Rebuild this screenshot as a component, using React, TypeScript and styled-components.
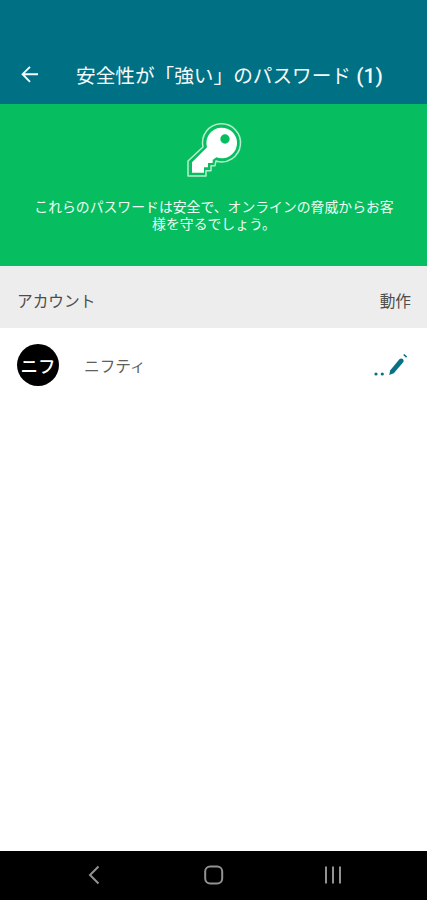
import React from "react";
import styled, { createGlobalStyle } from "styled-components";

const GlobalStyle = createGlobalStyle`
  * { box-sizing: border-box; }
  body { margin: 0; background: #fff; font-family: Roboto, "Noto Sans CJK JP", sans-serif; }
`;

const Screen = styled.div`
  display: flex;
  flex-direction: column;
  width: 427px;
  height: 900px;
  background: #fff;
  overflow: hidden;
`;

const AppBar = styled.header`
  display: flex;
  align-items: center;
  height: 104px;
  padding: 46px 0 0 20px;
  background: #007084;
  border-bottom: 1px solid #08707a;
  color: #f4fafb;
`;

const BackButton = styled.button`
  display: flex;
  width: 20px;
  height: 20px;
  padding: 0;
  border: 0;
  background: none;
  color: inherit;
`;

const Title = styled.h1`
  margin: 3px 0 0 36px;
  font-size: 21px;
  font-weight: 500;
  line-height: 28px;
  white-space: nowrap;
`;

const TitleText = styled.span`
  font-size: 19.65px;
  font-weight: 400;
`;

const Banner = styled.section`
  display: flex;
  flex-direction: column;
  align-items: center;
  height: 162px;
  padding-top: 6px;
  background: #06be60;
  color: #effcf4;
`;

const Message = styled.p`
  margin: 9px 0 0 1px;
  font-size: 13.85px;
  line-height: 17px;
  text-align: center;
  white-space: nowrap;
`;

const TableHead = styled.div`
  display: flex;
  align-items: center;
  justify-content: space-between;
  height: 62px;
  padding: 7px 16px 0 17px;
  background: #eeeded;
  color: #4c4c4c;
  font-size: 15.7px;
`;

const Row = styled.div`
  display: flex;
  align-items: center;
  height: 74px;
  padding: 0 17px;
`;

const Avatar = styled.div`
  display: flex;
  align-items: center;
  justify-content: center;
  width: 42px;
  height: 42px;
  border-radius: 50%;
  background: #000;
  color: #fff;
  font-size: 17.5px;
  font-weight: 500;
`;

const AccountName = styled.span`
  flex: 1;
  margin: 1px 0 0 25px;
  color: #606060;
  font-size: 15.7px;
`;

const EditButton = styled.button`
  display: flex;
  padding: 0;
  border: 0;
  background: none;
`;

const NavBar = styled.nav`
  display: flex;
  align-items: center;
  justify-content: space-between;
  height: 49px;
  margin-top: auto;
  padding: 0 84px 2px;
  background: #000;
`;

const BackArrow = () => (
  <svg width="20" height="20" viewBox="0 0 20 20" fill="none" stroke="currentColor" strokeWidth="1.9">
    <path d="M18 9.2H3M10 1.8L2.6 9.2L10 16.8" />
  </svg>
);

const KeyIcon = () => (
  <svg width="90" height="80" viewBox="-4 0 270 240">
    <path
      d="M98 111A57 57 0 1 1 137 153L134 167H122V182H107V198H53V153Z"
      fill="none"
      stroke="#b5f0cd"
      strokeWidth="4.5"
      strokeLinejoin="round"
    />
    <path
      fill="#fff"
      fillRule="evenodd"
      d="M110 112A46 46 0 1 1 138 142L127 150V159H113V172H101V188H65V157ZM164 73A14 14 0 1 0 164 101A14 14 0 1 0 164 73Z"
    />
  </svg>
);

const PencilIcon = () => (
  <svg width="38" height="26" viewBox="0 0 38 26" fill="#087184">
    <circle cx="4" cy="22" r="1.6" />
    <circle cx="10.3" cy="22" r="1.6" />
    <path d="M17.2 23L18.3 18.3L27.6 7.1Q29.2 5.9 30.8 7.1Q32.3 8.5 31.4 10.1L21.8 21.2Z" />
    <path d="M31.2 3L32.3 1.9L35.1 4.4L34.1 5.7Z" />
  </svg>
);

const NavIcon = ({ children }: { children: React.ReactNode }) => (
  <svg width="20" height="20" viewBox="0 0 20 20" fill="none" stroke="#929292" strokeWidth="2">
    {children}
  </svg>
);

export default function App() {
  return (
    <>
      <GlobalStyle />
      <Screen lang="ja">
        <AppBar>
          <BackButton aria-label="戻る">
            <BackArrow />
          </BackButton>
          <Title>
            <TitleText>安全性が「強い」のパスワード</TitleText> (1)
          </Title>
        </AppBar>
        <Banner>
          <KeyIcon />
          <Message>
            これらのパスワードは安全で、オンラインの脅威からお客
            <br />
            様を守るでしょう。
          </Message>
        </Banner>
        <TableHead>
          <span>アカウント</span>
          <span>動作</span>
        </TableHead>
        <Row>
          <Avatar>ニフ</Avatar>
          <AccountName>ニフティ</AccountName>
          <EditButton aria-label="編集">
            <PencilIcon />
          </EditButton>
        </Row>
        <NavBar>
          <NavIcon>
            <path d="M14.5 1.5L6 10L14.5 18.5" />
          </NavIcon>
          <NavIcon>
            <rect x="1.2" y="1.5" width="17" height="17" rx="5" />
          </NavIcon>
          <NavIcon>
            <path d="M3 1.5V18.5M10 1.5V18.5M17 1.5V18.5" />
          </NavIcon>
        </NavBar>
      </Screen>
    </>
  );
}
